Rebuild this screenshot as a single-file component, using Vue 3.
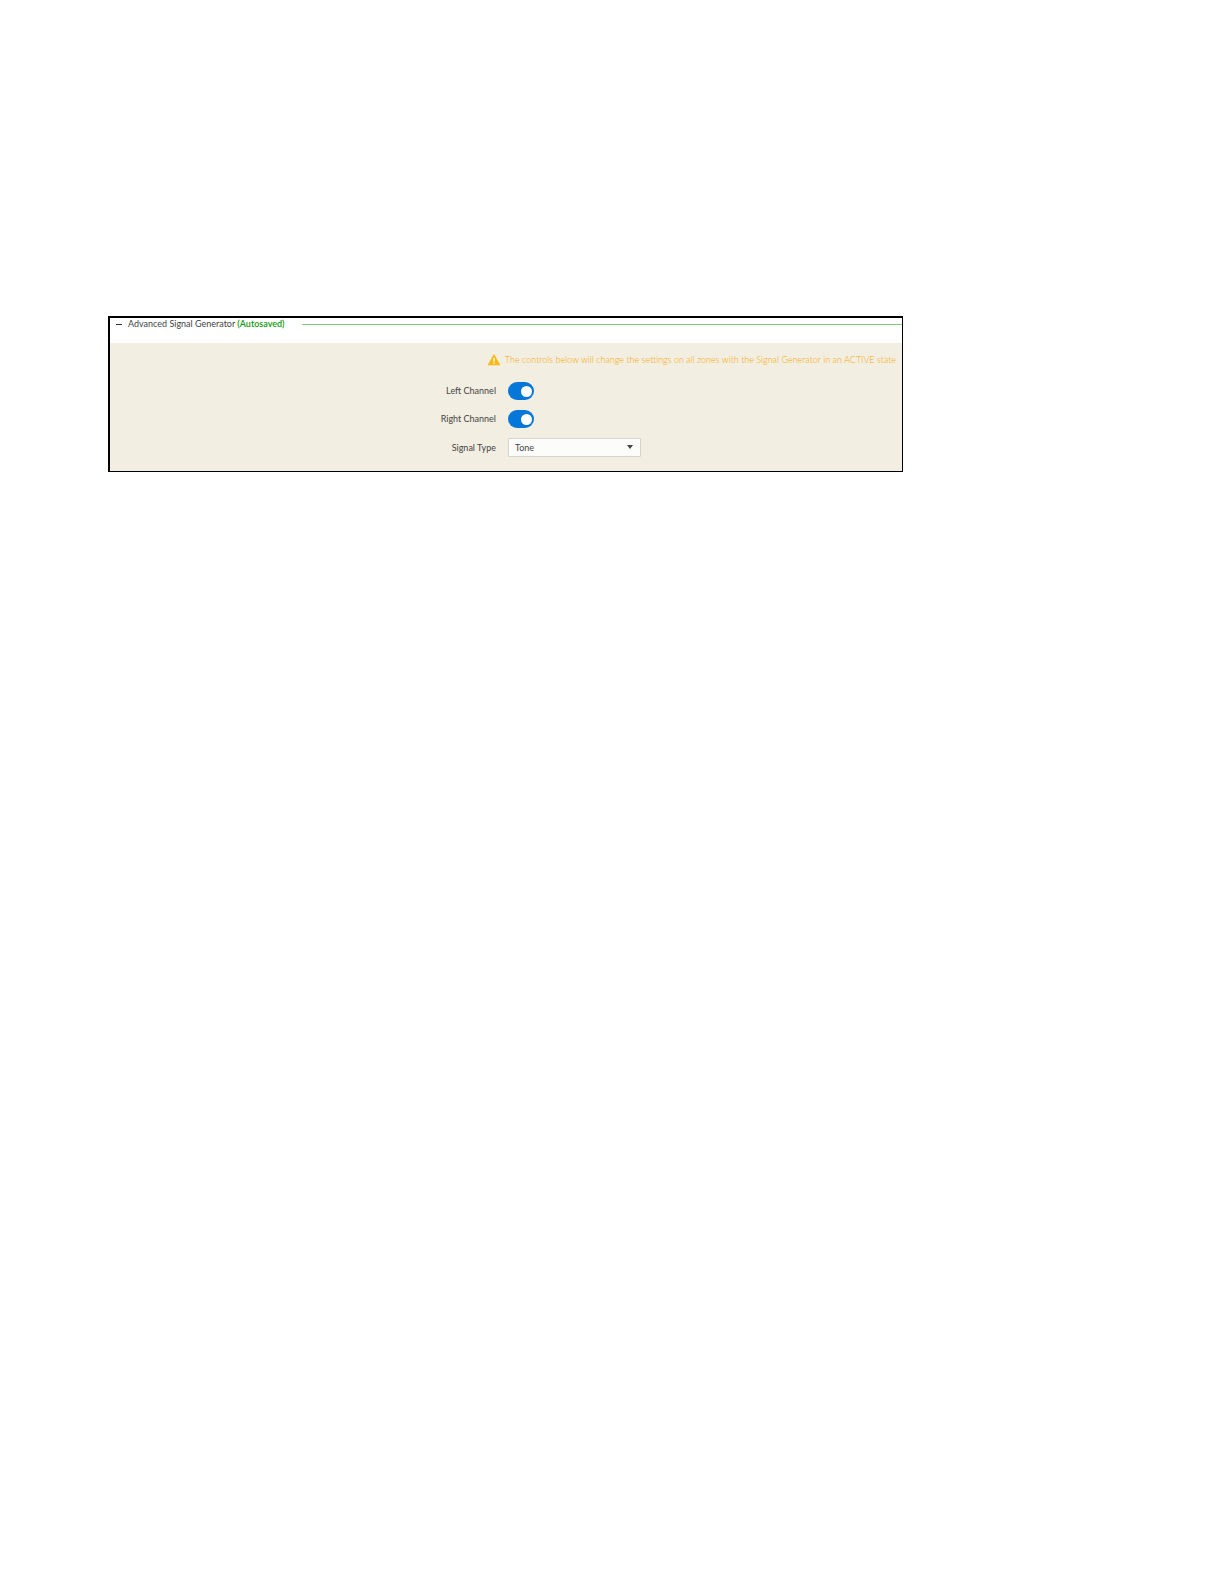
<script setup>
import { ref } from 'vue';

const open = ref(true);
const signalType = ref('Tone');

const channels = ref([
  { id: 'left', label: 'Left Channel', enabled: true },
  { id: 'right', label: 'Right Channel', enabled: true }
]);
</script>

<template>
  <main class="page">
    <section class="panel">
      <header class="panel-header">
        <button class="collapse-btn" aria-label="Toggle section" @click="open = !open">
          <span class="collapse-icon"></span>
        </button>
        <h2 class="panel-title">
          Advanced Signal Generator <span class="saved">(Autosaved)</span>
        </h2>
        <span class="rule"></span>
      </header>

      <div v-if="open" class="panel-content">
        <p class="warning">
          <svg class="warning-icon" viewBox="0 0 14 13" aria-hidden="true">
            <path
              d="M7 1.1 L12.9 11.6 H1.1 Z"
              fill="#fbb917"
              stroke="#fbb917"
              stroke-width="1.4"
              stroke-linejoin="round"
            />
            <path d="M6.1 4.2 H7.9 L7.6 8.3 H6.4 Z" fill="#fff" />
            <circle cx="7" cy="10" r="0.9" fill="#fff" />
          </svg>
          <span>The controls below will change the settings on all zones with the Signal Generator in an ACTIVE state</span>
        </p>

        <div v-for="channel in channels" :key="channel.id" class="row">
          <label class="row-label" :for="channel.id">{{ channel.label }}</label>
          <input :id="channel.id" v-model="channel.enabled" class="switch" type="checkbox" role="switch" />
        </div>

        <div class="row">
          <label class="row-label" for="signal-type">Signal Type</label>
          <div class="select-box">
            <select id="signal-type" v-model="signalType" class="select">
              <option>Tone</option>
              <option>Pink Noise</option>
              <option>White Noise</option>
            </select>
            <span class="caret"></span>
          </div>
        </div>
      </div>
    </section>
  </main>
</template>

<style>
body {
  background: #fff;
}
</style>

<style scoped>
.page {
  padding: 316px 321px 0 108px;
  font-family: Lato, "Liberation Sans", sans-serif;
  font-size: 9px;
  line-height: 12px;
  color: #444;
}

.panel {
  border: 1px solid #000;
  border-top-width: 2px;
  border-left-width: 2px;
}

.panel-header {
  display: flex;
  align-items: center;
  height: 12px;
  padding: 0 0 13px 6px;
}

.collapse-btn {
  display: flex;
  align-items: center;
  width: 12px;
  height: 12px;
  padding: 0;
  border: none;
  background: none;
  cursor: pointer;
}

.collapse-icon {
  width: 6px;
  height: 1px;
  background: #333;
}

.panel-title {
  margin: 0;
  font-size: 9px;
  font-weight: 400;
  white-space: nowrap;
}

.saved {
  color: #0f9a0f;
  font-weight: 600;
}

.rule {
  flex: 1;
  height: 1px;
  margin-left: 17px;
  background: #82c67c;
}

.panel-content {
  display: flex;
  flex-direction: column;
  gap: 10px;
  padding: 8px 0 15px;
  background: #f3eee2;
}

.warning {
  display: flex;
  align-items: flex-start;
  justify-content: flex-end;
  gap: 4px;
  height: 18px;
  margin: 0;
  padding: 3px 6px 0 0;
  color: #f5a800;
  font-weight: 300;
  white-space: nowrap;
}

.warning-icon {
  width: 14px;
  height: 12px;
}

/* Label column ends just before the middle of the panel */
.row {
  display: grid;
  grid-template-columns: 386fr 394fr;
  align-items: center;
  column-gap: 12px;
  height: 18px;
}

.row-label {
  text-align: right;
}

.switch {
  appearance: none;
  display: flex;
  align-items: center;
  justify-content: flex-end;
  width: 26px;
  height: 18px;
  margin: 0;
  padding: 0 2px;
  box-sizing: border-box;
  border-radius: 9px;
  background: #999;
  cursor: pointer;
}

.switch::before {
  content: "";
  width: 11px;
  height: 11px;
  border-radius: 50%;
  background: #fff;
}

.switch:checked {
  background: #0577d9;
}

.switch:not(:checked) {
  justify-content: flex-start;
}

.select-box {
  position: relative;
  display: flex;
  width: 133px;
}

.select {
  appearance: none;
  width: 100%;
  height: 19px;
  padding: 0 20px 0 6px;
  border: 1px solid #d5d3cc;
  border-radius: 1px;
  background: #fcfcfb;
  color: #444;
  font: inherit;
}

.caret {
  position: absolute;
  top: 7px;
  right: 8px;
  border: 3px solid transparent;
  border-top: 4px solid #444;
  border-bottom: none;
  pointer-events: none;
}
</style>
